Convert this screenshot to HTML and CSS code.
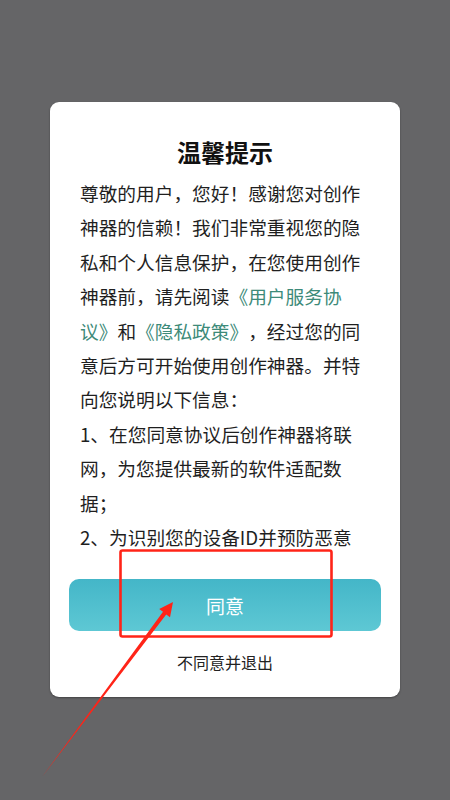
FILE: index.html
```html
<!DOCTYPE html>
<html lang="zh-CN">
<head>
<meta charset="utf-8">
<title>温馨提示</title>
<link rel="stylesheet" href="styles.css">
</head>
<body>
<div class="screen">
  <div class="dialog">
    <h1 class="title">温馨提示</h1>
    <div class="content">
      <p class="para">尊敬的用户，您好！感谢您对创作<br>神器的信赖！我们非常重视您的隐<br>私和个人信息保护，在您使用创作<br>神器前，请先阅读<span class="link">《用户服务协<br>议》</span>和<span class="link">《隐私政策》</span>，经过您的同<br>意后方可开始使用创作神器。并特<br>向您说明以下信息：</p>
      <p class="para">1、在您同意协议后创作神器将联<br>网，为您提供最新的软件适配数<br>据；</p>
      <p class="para">2、为识别您的设备ID并预防恶意</p>
    </div>
    <button class="agree">同意</button>
    <div class="decline">不同意并退出</div>
  </div>
  <svg class="annotation" width="450" height="800" viewBox="0 0 450 800">
    <rect x="120.5" y="550.5" width="211" height="86" rx="2" fill="none" stroke="#ff2418" stroke-width="2.6"/>
    <polygon fill="#ff2418" points="42,777 163,611.8 159.2,609 173,602 170,617.3 166.2,614.5"/>
  </svg>
</div>
</body>
</html>
```
FILE: styles.css
```css
html, body {
  margin: 0;
  padding: 0;
}
body {
  background: #656567;
  font-family: "Noto Sans CJK SC", "Noto Sans", sans-serif;
  color: #222;
}
.screen {
  position: relative;
  width: 450px;
  height: 800px;
  overflow: hidden;
  padding-top: 102px;
  box-sizing: border-box;
}
.dialog {
  margin-left: 50px;
  width: 350px;
  height: 595px;
  background: #fff;
  border-radius: 9px;
  box-shadow: 0 1px 2px rgba(0,0,0,0.35);
  box-sizing: border-box;
  padding-top: 33px;
  display: flex;
  flex-direction: column;
}
.title {
  margin: 0;
  font-size: 24px;
  line-height: 34px;
  font-weight: 700;
  text-align: center;
  color: #111;
}
.content {
  margin: 7px 30px 0 30px;
  height: 378px;
  overflow: hidden;
  font-size: 18.7px;
  line-height: 34.4px;
  white-space: nowrap;
  color: #1f1f1f;
  text-spacing-trim: space-all;
}
.para {
  margin: 0;
}
.link {
  color: #3d8a79;
}
.agree {
  margin: 25px 0 0 19px;
  width: 312px;
  height: 52px;
  border: 0;
  border-radius: 10px;
  background: linear-gradient(180deg, #44b6c8 0%, #5ec8d4 100%);
  color: #fff;
  font-family: "Noto Sans CJK SC", "Noto Sans", sans-serif;
  font-size: 19px;
  padding: 0;
}
.decline {
  margin-top: 19px;
  text-align: center;
  font-size: 16px;
  line-height: 24px;
  color: #222;
}
.annotation {
  position: absolute;
  left: 0;
  top: 0;
  pointer-events: none;
}
```
